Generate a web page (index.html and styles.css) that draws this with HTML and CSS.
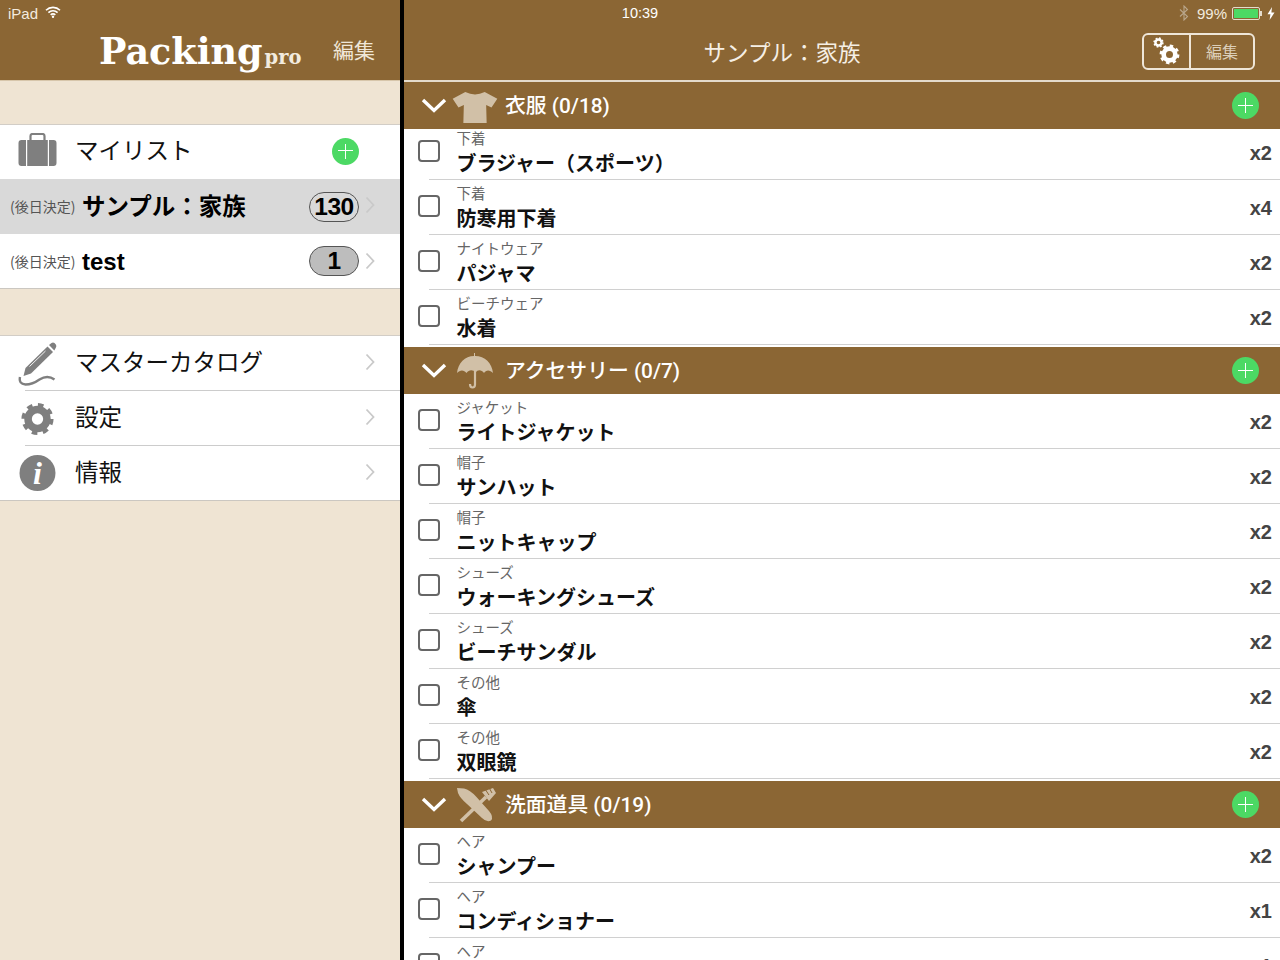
FILE: index.html
```html
<!DOCTYPE html>
<html lang="ja">
<head>
<meta charset="utf-8">
<title>Packing pro</title>
<link rel="stylesheet" href="styles.css">
</head>
<body>
<svg class="defs" width="0" height="0" aria-hidden="true">
  <symbol id="chev-r" viewBox="0 0 10 18"><path d="M1.5 1.5 L8.5 9 L1.5 16.5" fill="none" stroke="currentColor" stroke-width="1.8"/></symbol>
  <symbol id="chev-d" viewBox="0 0 26 15"><path d="M2 2 L13 12.5 L24 2" fill="none" stroke="#fff" stroke-width="3.4"/></symbol>
  <symbol id="gear" viewBox="0 0 36 36">
    <circle cx="18" cy="18" r="10" fill="none" stroke="currentColor" stroke-width="8"/>
    <circle cx="18" cy="18" r="14.5" fill="none" stroke="currentColor" stroke-width="5" stroke-dasharray="5.7 5.69"/>
  </symbol>
</svg>

<div class="statusbar">
  <div class="status-left">
    <span>iPad</span>
    <svg class="wifi" viewBox="0 0 16 12"><path d="M1 4.2 A10 10 0 0 1 15 4.2 M3.4 6.6 A6.6 6.6 0 0 1 12.6 6.6 M5.7 8.9 A3.2 3.2 0 0 1 10.3 8.9" fill="none" stroke="#fff" stroke-width="1.6"/><circle cx="8" cy="10.8" r="1.2" fill="#fff"/></svg>
  </div>
  <div class="status-time">10:39</div>
  <div class="status-right">
    <svg class="bt" viewBox="0 0 10 16"><path d="M1 4.5 L8.5 11.5 L5 15 V1 L8.5 4.5 L1 11.5" fill="none" stroke="#b9a68b" stroke-width="1.1"/></svg>
    <span class="pct">99%</span>
    <div class="battery"><div class="battery-fill"></div></div>
    <div class="battery-tip"></div>
    <svg class="bolt" viewBox="0 0 8 13"><path d="M5 0 L0.5 7.3 H3.4 L2.6 13 L7.5 5.4 H4.4 Z" fill="#fff"/></svg>
  </div>
</div>

<div class="app">
  <aside class="side">
    <header class="side-head">
      <div class="logo">Packing<span class="logo-pro">pro</span></div>
      <div class="side-edit">編集</div>
    </header>
    <section class="group group-lists">
      <div class="srow srow-short">
        <svg class="sicon suitcase" viewBox="0 0 38 33"><path d="M12 8 V3 Q12 1 14 1 H24 Q26 1 26 3 V8" fill="none" stroke="#7f7f7f" stroke-width="2.2"/><path d="M3 7 H7.500 V33 H3 Q0 33 0 30 V10 Q0 7 3 7 Z M8.700 7 H29.300 V33 H8.700 Z M30.500 7 H35 Q38 7 38 10 V30 Q38 33 35 33 H30.500 Z" fill="#7f7f7f"/></svg>
        <span class="slabel slabel-top">マイリスト</span>
        <span class="plus plus-side"></span>
      </div>
      <div class="srow list selected">
        <span class="when">(後日決定)</span>
        <span class="lname lname-cjk">サンプル：家族</span>
        <span class="badge">130</span>
        <svg class="chev chev-up"><use href="#chev-r"/></svg>
      </div>
      <div class="srow list srow-short">
        <span class="when when-low">(後日決定)</span>
        <span class="lname lname-latin">test</span>
        <span class="badge badge-gray">1</span>
        <svg class="chev"><use href="#chev-r"/></svg>
      </div>
    </section>
    <section class="group group-menu">
      <div class="srow">
        <svg class="sicon" viewBox="0 0 38 44"><path d="M7 26 L29 4.500 L34.500 10 L12.500 31.500 L5 34 Z" fill="#7f7f7f"/><path d="M30.500 3 L33 1 Q34.500 0 36 1 L37.500 2.800 Q38.300 4.500 37.300 5.700 L35.800 8.500 Z" fill="#7f7f7f"/><path d="M11 24.500 L27 9" stroke="#fff" stroke-width="0.9"/><path d="M1.500 35 Q0 42 7 42.500 Q14 42.500 21 37.500 Q29 32.500 36 37.500" fill="none" stroke="#7f7f7f" stroke-width="2.400"/></svg>
        <span class="slabel">マスターカタログ</span>
        <svg class="chev chev-up"><use href="#chev-r"/></svg>
      </div>
      <div class="srow">
        <svg class="sicon gear-icon"><use href="#gear"/></svg>
        <span class="slabel">設定</span>
        <svg class="chev chev-up"><use href="#chev-r"/></svg>
      </div>
      <div class="srow srow-short">
        <svg class="sicon info-icon" viewBox="0 0 38 38"><circle cx="19" cy="19" r="18" fill="#7f7f7f"/><text x="19" y="30" text-anchor="middle" class="info-i">i</text></svg>
        <span class="slabel">情報</span>
        <svg class="chev chev-up"><use href="#chev-r"/></svg>
      </div>
    </section>
  </aside>

  <main class="main">
    <header class="main-head">
      <h1 class="main-title">サンプル：家族</h1>
      <div class="seg">
        <div class="seg-gear">
          <svg class="gear-s"><use href="#gear"/></svg>
          <svg class="gear-l"><use href="#gear"/></svg>
        </div>
        <div class="seg-edit">編集</div>
      </div>
    </header>
    <div class="packlist">
      <section class="cat">
        <div class="cat-head">
          <svg class="cat-chev"><use href="#chev-d"/></svg>
          <svg class="cat-icon shirt" viewBox="0 0 46 34"><path d="M13 1 Q23 6 33 1 L46 8 L40 17 L34.500 14.500 L35 33 H11 L11.500 14.500 L6 17 L0 8 Z" fill="#d1c0a7"/></svg>
          <span class="cat-name">衣服 (0/18)</span>
          <span class="plus"></span>
        </div>
        <div class="item item-clipped"><span class="check"></span><div class="item-text"><div class="item-kind">下着</div><div class="item-name">ブラジャー（スポーツ）</div></div><span class="qty">x2</span></div>
        <div class="item"><span class="check"></span><div class="item-text"><div class="item-kind">下着</div><div class="item-name">防寒用下着</div></div><span class="qty">x4</span></div>
        <div class="item"><span class="check"></span><div class="item-text"><div class="item-kind">ナイトウェア</div><div class="item-name">パジャマ</div></div><span class="qty">x2</span></div>
        <div class="item"><span class="check"></span><div class="item-text"><div class="item-kind">ビーチウェア</div><div class="item-name">水着</div></div><span class="qty">x2</span></div>
      </section>
      <section class="cat">
        <div class="cat-head">
          <svg class="cat-chev"><use href="#chev-d"/></svg>
          <svg class="cat-icon" viewBox="0 0 46 36"><path d="M23 0 V3 C33 3 40 10 41 20 C38 16.500 34 16.500 32 20 C29.500 16.500 25.500 16.500 23.800 19.500 L23.800 19.500 C21 16.500 17 16.500 14.500 20 C12 16.500 8 16.500 5 20 C6 10 13 3 22 3 V0 Z" fill="#d1c0a7"/><path d="M23 18 V31.500 Q23 34.500 20.500 34.500 Q18 34.500 18 31" fill="none" stroke="#d1c0a7" stroke-width="2.2"/></svg>
          <span class="cat-name">アクセサリー (0/7)</span>
          <span class="plus"></span>
        </div>
        <div class="item"><span class="check"></span><div class="item-text"><div class="item-kind">ジャケット</div><div class="item-name">ライトジャケット</div></div><span class="qty">x2</span></div>
        <div class="item"><span class="check"></span><div class="item-text"><div class="item-kind">帽子</div><div class="item-name">サンハット</div></div><span class="qty">x2</span></div>
        <div class="item"><span class="check"></span><div class="item-text"><div class="item-kind">帽子</div><div class="item-name">ニットキャップ</div></div><span class="qty">x2</span></div>
        <div class="item"><span class="check"></span><div class="item-text"><div class="item-kind">シューズ</div><div class="item-name">ウォーキングシューズ</div></div><span class="qty">x2</span></div>
        <div class="item"><span class="check"></span><div class="item-text"><div class="item-kind">シューズ</div><div class="item-name">ビーチサンダル</div></div><span class="qty">x2</span></div>
        <div class="item"><span class="check"></span><div class="item-text"><div class="item-kind">その他</div><div class="item-name">傘</div></div><span class="qty">x2</span></div>
        <div class="item"><span class="check"></span><div class="item-text"><div class="item-kind">その他</div><div class="item-name">双眼鏡</div></div><span class="qty">x2</span></div>
      </section>
      <section class="cat">
        <div class="cat-head">
          <svg class="cat-chev"><use href="#chev-d"/></svg>
          <svg class="cat-icon" viewBox="0 0 46 36"><path d="M5 1 L12 1.500 Q18 3 24 9.500 L37 24 Q42 30 39 33.500 Q35 36 30 31 L15 17 Q8 11 6 6 Z" fill="#d1c0a7"/><path d="M9 34 L34 10" stroke="#d1c0a7" stroke-width="3.600"/><path d="M30 5 L41 1 L44 6 L37 14 Z" fill="#d1c0a7"/><path d="M33 2 L37 8 M37 0.500 L40 6" stroke="#8b6634" stroke-width="1"/></svg>
          <span class="cat-name">洗面道具 (0/19)</span>
          <span class="plus"></span>
        </div>
        <div class="item"><span class="check"></span><div class="item-text"><div class="item-kind">ヘア</div><div class="item-name">シャンプー</div></div><span class="qty">x2</span></div>
        <div class="item"><span class="check"></span><div class="item-text"><div class="item-kind">ヘア</div><div class="item-name">コンディショナー</div></div><span class="qty">x1</span></div>
        <div class="item"><span class="check"></span><div class="item-text"><div class="item-kind">ヘア</div></div><span class="qty">x1</span></div>
      </section>
    </div>
  </main>
</div>
</body>
</html>
```
FILE: styles.css
```css
* { box-sizing: border-box; }
html, body { margin: 0; padding: 0; height: 960px; overflow: hidden; }
body {
  font-family: "Liberation Sans", "Noto Sans CJK JP", sans-serif;
  color: #000;
  background: #000;
  position: relative;
}
.defs { position: absolute; }

/* status bar lies over both headers */
.statusbar {
  position: absolute;
  top: 0; left: 0; right: 0;
  height: 26px;
  display: grid;
  grid-template-columns: 1fr auto 1fr;
  align-items: center;
  font-size: 15px;
  color: #f3ebdf;
  z-index: 2;
}
.status-left { display: flex; align-items: center; gap: 7px; padding-left: 8px; }
.wifi { width: 16px; height: 12px; margin-top: -2px; }
.status-time { font-size: 14.5px; color: #fff; }
.status-right { display: flex; align-items: center; justify-content: flex-end; padding-right: 5px; }
.bt { width: 10px; height: 16px; margin-right: 8px; }
.pct { font-size: 15px; margin-right: 5px; }
.battery {
  width: 28px; height: 13px;
  border: 1px solid #e5dccd;
  border-radius: 2px;
  padding: 1px;
}
.battery-fill { height: 100%; background: #4cd964; }
.battery-tip { width: 2px; height: 5px; background: #e5dccd; margin-right: 5px; }
.bolt { width: 8px; height: 13px; }

.app { display: flex; height: 960px; }

/* sidebar */
.side {
  width: 404px;
  flex: none;
  border-right: 4px solid #000;
  background: #efe4d3;
}
.side-head {
  height: 81px;
  background: #8b6634;
  border-bottom: 1px solid #d7c6ab;
  display: flex;
  align-items: center;
  padding: 20px 25px 0 99px;
  color: #fff;
}
.logo {
  font-family: "DejaVu Serif", "Liberation Serif", serif;
  font-weight: 700;
  font-size: 36.5px;
  flex: 1;
  white-space: nowrap;
  padding-top: 3px;
}
.logo-pro { font-size: 19.5px; margin-left: 2px; color: #f2ebdf; }
.side-edit { font-size: 21px; color: #f0e7d8; font-family: "Noto Sans CJK JP", sans-serif; padding-bottom: 2px; }

.group {
  background: #fff;
  border-top: 1px solid #d2cdc6;
  border-bottom: 1px solid #cbc7c1;
}
.group-lists { margin-top: 43px; }
.group-menu { margin-top: 46px; }
.srow {
  height: 55px;
  display: flex;
  align-items: center;
  padding-left: 18px;
  padding-right: 25px;
}
.srow-short { height: 54px; }
.group-menu .srow:not(:last-child) {
  background: linear-gradient(#ccc, #ccc) 25px 100% / 100% 1px no-repeat;
}
.sicon { width: 39px; flex: none; height: 44px; }
.suitcase { height: 33px; margin-bottom: 5px; }
.gear-icon { color: #7f7f7f; height: 34px; }
.info-icon { height: 38px; margin-top: -1px; }
.slabel {
  font-family: "Noto Sans CJK JP", sans-serif;
  font-size: 23.5px;
  margin-left: 18px;
  flex: 1;
  color: #111;
  padding-bottom: 5px;
}
.slabel-top { padding-bottom: 7px; }
.plus {
  width: 27px; height: 27px;
  border-radius: 50%;
  background: #4cd964;
  flex: none;
  background-image:
    linear-gradient(#fff, #fff),
    linear-gradient(#fff, #fff);
  background-size: 15px 1.4px, 1.4px 15px;
  background-position: center;
  background-repeat: no-repeat;
}
.plus-side { margin-right: 16px; margin-bottom: 2px; }
.chev { width: 10px; height: 18px; color: #c9c9c9; flex: none; }
.chev-up { margin-bottom: 3px; }
.list { padding-left: 10px; }
.selected { background: #d9d9d9; }
.when {
  font-family: "Noto Sans CJK JP", sans-serif;
  font-size: 14px;
  color: #555;
  width: 72px;
  flex: none;
  white-space: nowrap;
  padding-bottom: 2px;
}
.when-low { padding-bottom: 0; }
.lname { flex: 1; font-size: 23.5px; font-weight: 700; white-space: nowrap; }
.lname-cjk { padding-bottom: 4px; }
.lname-latin { font-size: 24px; padding-top: 2px; }
.badge {
  width: 50px; height: 30px;
  border: 1px solid #555;
  border-radius: 15px;
  text-align: center;
  font-size: 24.5px;
  font-weight: 700;
  line-height: 28px;
  letter-spacing: -0.5px;
  margin-right: 6px;
  flex: none;
}
.badge-gray { background: #bdbdbd; }

/* main list */
.main { flex: 1; min-width: 0; background: #fff; display: flex; flex-direction: column; height: 960px; overflow: hidden; }
.main-head {
  height: 82px;
  flex: none;
  background: #8b6634;
  box-shadow: inset 0 -2px 0 #e4dacb;
  display: flex;
  align-items: center;
  padding: 24px 25px 3px 18px;
  color: #fff;
}
.main-title {
  flex: 1;
  margin: 0;
  text-align: center;
  font-family: "Noto Sans CJK JP", sans-serif;
  font-size: 22.5px;
  font-weight: 400;
  color: #f5efe5;
  padding-bottom: 1px;
}
.seg {
  width: 113px; height: 37px;
  border: 2px solid #efe6d8;
  border-radius: 6px;
  display: flex;
}
.seg-gear {
  width: 47px;
  flex: none;
  border-right: 2px solid #efe6d8;
  position: relative;
  color: #fff;
}
.gear-s { position: absolute; left: 9px; top: 2px; width: 11px; height: 11px; }
.gear-l { position: absolute; left: 15px; top: 9px; width: 21px; height: 21px; }
.seg-edit {
  flex: 1;
  text-align: center;
  font-family: "Noto Sans CJK JP", sans-serif;
  font-size: 16px;
  line-height: 32px;
  color: #dccfba;
}

.packlist { flex: 1; overflow: hidden; }
.cat { margin-bottom: 2px; }
.cat-head {
  height: 47px;
  background: #8b6634;
  display: flex;
  align-items: center;
  padding: 0 21px 0 17px;
  color: #fff;
}
.cat-chev { width: 26px; height: 15px; flex: none; }
.cat-icon { width: 46px; height: 36px; flex: none; margin-left: 5px; }
.shirt { height: 33px; margin-top: 3px; margin-left: 5px; }
.cat-name {
  flex: 1;
  margin-left: 7px;
  padding-bottom: 4px;
  font-size: 20.8px;
  font-weight: 500;
  font-family: Roboto, "Noto Sans CJK JP", sans-serif;
}
.item {
  height: 55px;
  margin-left: 25px;
  border-bottom: 1px solid #d0d0d0;
  display: flex;
  align-items: flex-end;
  padding-right: 8px;
}
.item-clipped { height: 51px; }
.check {
  width: 22px; height: 22px;
  border: 2px solid #666;
  border-radius: 4px;
  margin-left: -11px;
  margin-bottom: 17px;
  flex: none;
}
.item-text { flex: 1; margin-left: 16.5px; align-self: flex-start; padding-top: 4px; font-family: "Noto Sans CJK JP", sans-serif; }
.item-clipped .item-text { margin-top: -4px; }
.item-kind { font-size: 14.5px; line-height: 18px; color: #666; }
.item-name { font-size: 20px; line-height: 27px; font-weight: 700; color: #111; margin-top: 2px; white-space: nowrap; }
.qty { font-size: 20px; font-weight: 700; line-height: 24px; color: #444; margin-bottom: 14px; }
.info-i { font-family: "Liberation Serif", serif; font-style: italic; font-weight: 700; font-size: 32px; fill: #fff; }
```
